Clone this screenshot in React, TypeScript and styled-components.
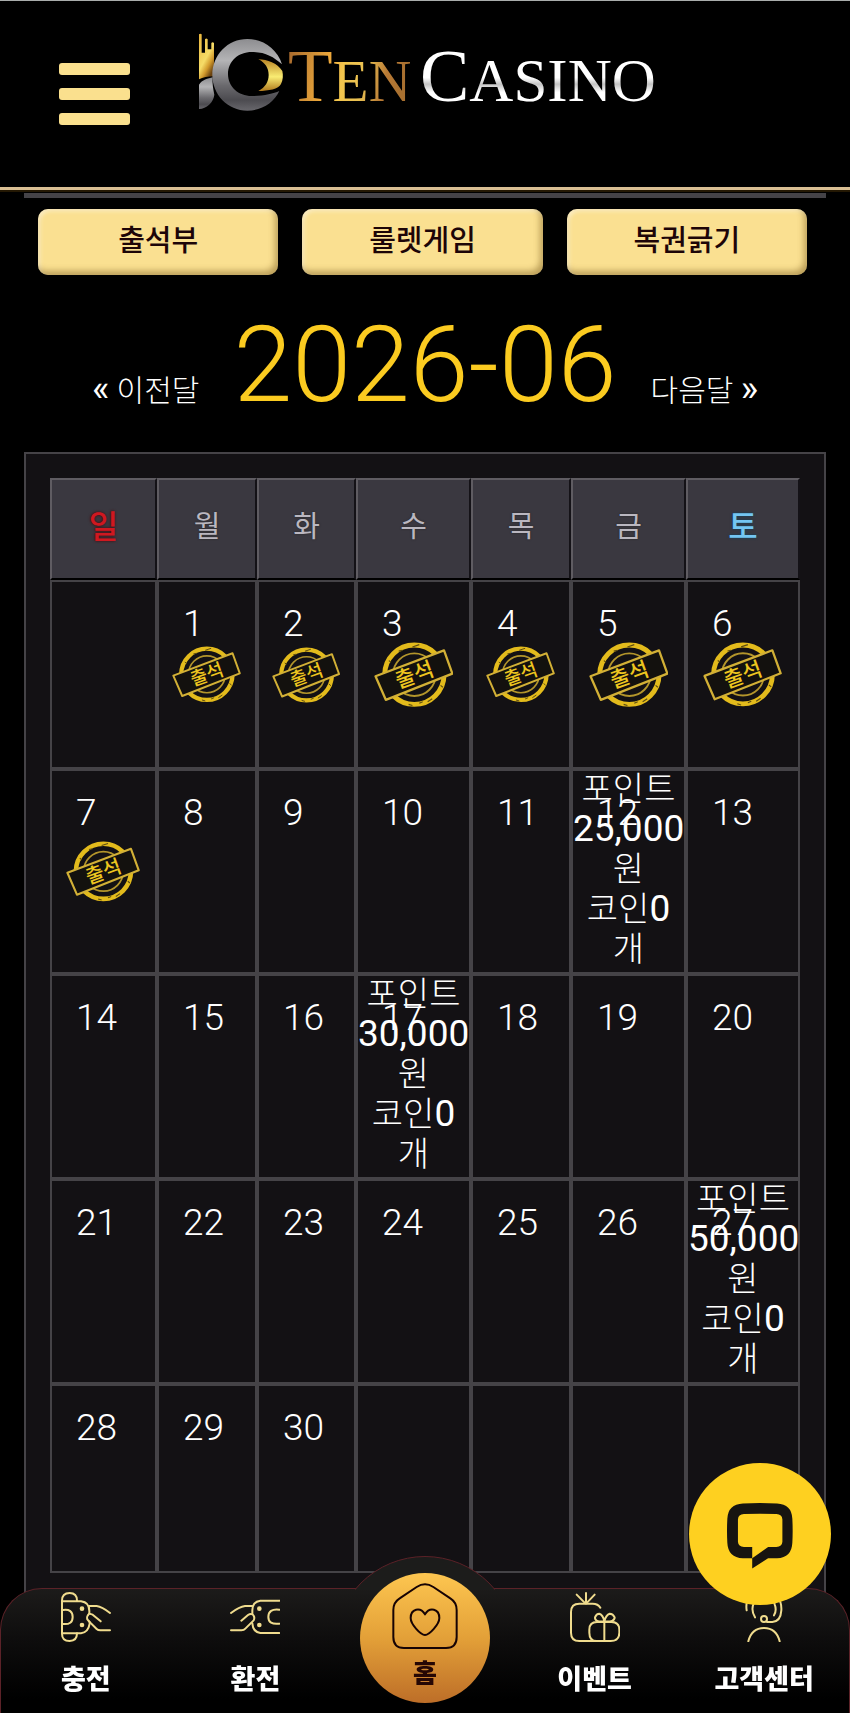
import React from "react";
import styled, { createGlobalStyle } from "styled-components";

const FONT = `Roboto, "Noto Sans CJK KR", sans-serif`;
const LINE = "#454347";

const GlobalStyle = createGlobalStyle`
  *, *::before, *::after { box-sizing: border-box; }
  body { margin: 0; background: #000; color: #fff; font-family: ${FONT}; }
  a { color: inherit; text-decoration: none; }
  button { font-family: inherit; border: 0; cursor: pointer; }
`;

const Page = styled.div`
  padding-bottom: 113px;
`;

const Header = styled.header`
  display: grid;
  grid-template-columns: 1fr auto 1fr;
  align-items: start;
  height: 190px;
  padding-top: 29px;
  border-top: 1px solid #a9adab;
  border-bottom: 3px solid #d9bf93;
  box-shadow: 0 2px 0 #241803;
`;

const MenuButton = styled.button`
  justify-self: start;
  display: flex;
  flex-direction: column;
  gap: 13px;
  width: 71px;
  margin: 33px 0 0 59px;
  padding: 0;
  background: none;
`;

const MenuBar = styled.span`
  height: 12px;
  border-radius: 3px;
  background: #fae08e;
`;

const Content = styled.main`
  margin: 3px 24px 0;
  border-top: 5px solid ${LINE};
`;

const TabBar = styled.nav`
  display: grid;
  grid-template-columns: repeat(3, 1fr);
  gap: 24px;
  padding: 11px 19px 0 14px;
`;

const TabButton = styled.button`
  height: 66px;
  padding: 0 0 3px;
  border-radius: 10px;
  background: #fae091;
  box-shadow: inset -3px -4px 6px rgba(110, 80, 20, 0.45), inset 2px 2px 4px rgba(255, 255, 255, 0.5);
  color: #1d0508;
  font-size: 29px;
  font-weight: 500;
  line-height: 40px;
`;

const MonthNav = styled.div`
  display: flex;
  justify-content: center;
  align-items: baseline;
  gap: 34px;
  height: 177px;
  padding-top: 30px;
`;

const MonthTitle = styled.h1`
  margin: 0;
  color: #fbcb20;
  font-size: 106px;
  font-weight: 300;
  line-height: 120px;
`;

const MonthLink = styled.a`
  font-size: 30px;
  font-weight: 300;
  line-height: 40px;
`;

const Arrow = styled.span`
  font-size: 37px;
  font-weight: 400;
`;

const Panel = styled.section`
  padding: 24px;
  border: 2px solid ${LINE};
  background: #131114;
`;

const Calendar = styled.table`
  width: 100%;
  table-layout: fixed;
  border-collapse: separate;
  border-spacing: 0;
`;

const DayHead = styled.th<{ $tone?: "sun" | "sat" }>`
  height: 102px;
  padding: 0 0 5px;
  border: 2px solid;
  border-color: #5f5c62 #141217 #000 #5f5c62;
  background: #3a3840;
  color: ${(p) => (p.$tone === "sun" ? "#cf1820" : p.$tone === "sat" ? "#74c6f2" : "#bab7c0")};
  font-size: ${(p) => (p.$tone ? 32 : 29)}px;
  font-weight: ${(p) => (p.$tone ? 500 : 400)};
  line-height: 40px;
  text-shadow: ${(p) =>
    p.$tone === "sun" ? "0 0 3px #4a0006" : p.$tone === "sat" ? "0 0 3px #08435f" : "0 0 2px #222"};
`;

const DayCell = styled.td<{ $tall?: boolean }>`
  position: relative;
  height: ${(p) => (p.$tall ? 205 : 189)}px;
  padding: 0;
  border: 2px solid ${LINE};
  text-align: center;
  vertical-align: middle;
`;

const DayNumber = styled.span`
  position: absolute;
  top: 22px;
  left: 24px;
  font-size: 37px;
  font-weight: 300;
  line-height: 40px;
`;

const Reward = styled.div`
  margin: -3px 0 3px;
  font-size: 34px;
  font-weight: 300;
  line-height: 40px;
  white-space: nowrap;
`;

const Amount = styled.b`
  font-size: 37px;
  font-weight: 400;
`;

const StampArt = styled.svg`
  display: block;
  width: 72%;
  margin: 0 auto;
`;

const BottomNav = styled.nav`
  position: fixed;
  left: 0;
  right: 0;
  bottom: 0;
  display: grid;
  grid-template-columns: repeat(5, 1fr);
  height: 125px;
  border: 1px solid #5c2228;
  border-bottom: 0;
  border-radius: 42px 42px 0 0;
  background: linear-gradient(#1c1b1a 0, #0e0d0d 50px, #000 110px);
`;

const Bump = styled.span`
  position: absolute;
  left: 50%;
  bottom: 123px;
  width: 140px;
  height: 34px;
  overflow: hidden;
  transform: translateX(-50%);

  &::before {
    content: "";
    position: absolute;
    top: 0;
    left: -21px;
    width: 182px;
    height: 182px;
    border: 1px solid #5c2228;
    border-radius: 50%;
    background: #1c1c1b;
  }
`;

const NavItem = styled.a`
  display: flex;
  flex-direction: column;
  align-items: center;
  gap: 18px;
  padding-top: 3px;
  font-size: 27px;
  font-weight: 900;
  line-height: 40px;
`;

const HomeItem = styled.a`
  position: relative;
  justify-self: center;
  display: flex;
  flex-direction: column;
  align-items: center;
  gap: 4px;
  width: 130px;
  height: 130px;
  margin-top: -16px;
  padding-top: 9px;
  border-radius: 50%;
  background: linear-gradient(#fdc650, #e3a038 50%, #bd6e28);
  color: #260704;
  font-size: 26px;
  font-weight: 900;
  line-height: 40px;
`;

const ChatButton = styled.button`
  position: fixed;
  right: 19px;
  bottom: 108px;
  display: flex;
  justify-content: center;
  align-items: center;
  width: 142px;
  height: 142px;
  padding: 4px 0 0;
  border-radius: 50%;
  background: #fed020;
`;

const Logo = () => (
  <svg width="464" height="92" viewBox="193 30 464 92" role="img" aria-label="Ten Casino">
    <defs>
      <linearGradient id="steel" x1="0" y1="0" x2="0" y2="1">
        <stop offset="0" stopColor="#8d8d90" />
        <stop offset="0.3" stopColor="#b4b4b6" />
        <stop offset="0.65" stopColor="#6a696d" />
        <stop offset="0.85" stopColor="#4c4b50" />
        <stop offset="1" stopColor="#68676c" />
      </linearGradient>
      <linearGradient id="hand" x1="0" y1="0" x2="0.6" y2="1">
        <stop offset="0" stopColor="#e9b53b" />
        <stop offset="0.6" stopColor="#f6dc67" />
        <stop offset="0.8" stopColor="#d29a2c" />
        <stop offset="1" stopColor="#6b4310" />
      </linearGradient>
      <linearGradient id="eye" x1="0" y1="0" x2="0" y2="1">
        <stop offset="0" stopColor="#b98424" />
        <stop offset="0.55" stopColor="#f9ec73" />
        <stop offset="1" stopColor="#b07a1d" />
      </linearGradient>
      <linearGradient id="gold" x1="0" y1="0" x2="1" y2="0.15">
        <stop offset="0" stopColor="#a3642c" />
        <stop offset="0.2" stopColor="#c98a35" />
        <stop offset="0.38" stopColor="#efa93b" />
        <stop offset="0.5" stopColor="#f3c64d" />
        <stop offset="0.68" stopColor="#e9c052" />
        <stop offset="0.85" stopColor="#b87a35" />
        <stop offset="1" stopColor="#a87030" />
      </linearGradient>
      <linearGradient id="silver" x1="0" y1="0" x2="0" y2="1">
        <stop offset="0.3" stopColor="#fff" />
        <stop offset="0.52" stopColor="#fff" />
        <stop offset="0.6" stopColor="#c4c4c4" />
        <stop offset="0.7" stopColor="#fff" />
      </linearGradient>
    </defs>
    <g transform="scale(0.33333)">
      <path
        fill="url(#hand)"
        d="M597 103q4-4 8 0V158h10V118q4-5 8 0V148h11V129q4-5 8 0V229C624 230 608 232 597 238Z"
      />
      <path fill="url(#steel)" d="M597 254C606 240 624 235 638 232C636 250 640 268 643 284C640 308 620 326 597 327Z" />
      <path
        fill="url(#steel)"
        d="M846 193C832 148 790 117 742 117C683 117 637 165 637 225C637 284 683 332 742 332C785 332 822 308 838 273C820 281 790 288 755 288C715 288 684 260 684 222C684 184 715 156 755 156C795 156 820 170 846 193Z"
      />
      <path
        fill="url(#eye)"
        d="M775 178C802 178 832 190 847 213C850 226 849 240 843 252C836 267 806 273 775 273C796 262 806 245 806 225C806 205 796 188 775 178Z"
      />
    </g>
    <g fontFamily="'Liberation Serif', serif">
      <text x="288" y="101" fontSize="73" fill="url(#gold)">
        T<tspan fontSize="59">EN</tspan>
      </text>
      <text x="420" y="101" fontSize="74" fill="url(#silver)">
        C<tspan fontSize="61">ASINO</tspan>
      </text>
    </g>
  </svg>
);

const Stamp = () => (
  <StampArt viewBox="0 0 210 172" role="img" aria-label="출석">
    <g transform="translate(-455 -601)" fill="none" stroke="#e3bb1c">
      <circle cx="561" cy="687" r="78" strokeWidth="13" />
      <circle cx="561" cy="687" r="56" strokeWidth="5" stroke="#b3952b" />
      <g stroke="#5d4c10" strokeWidth="3">
        <path d="M556 614l18-6M520 625l10-2M596 758l12-8M546 765l10 3M494 650l6 4M630 715l6 5M574 762l9-4" />
      </g>
      <path d="M459 691L639 623L661 684L486 753Z" fill="#13110e" strokeWidth="6" stroke="#d2b036" strokeLinejoin="round" />
      <text
        transform="rotate(-20 561 687)"
        x="561"
        y="707"
        textAnchor="middle"
        fontFamily="'Noto Sans CJK KR', sans-serif"
        fontSize="56"
        fontWeight="500"
        fill="#edc51f"
        stroke="none"
      >
        출석
      </text>
    </g>
  </StampArt>
);

const iconProps = {
  width: 50,
  height: 50,
  fill: "none",
  stroke: "#f0dc8e",
  strokeWidth: 6,
  strokeLinecap: "round" as const,
  strokeLinejoin: "round" as const,
  "aria-hidden": true,
};

const DepositIcon = () => (
  <svg {...iconProps} viewBox="180 155 150 150">
    <path d="M183 181V280Q183 302 206 302Q228 302 228 279M183 181Q183 158 206 158Q228 158 228 181" />
    <path d="M183 183H240Q265 186 265 212V219Q256 228 259 237L266 245V250Q262 276 240 279H183" />
    <path d="M186 209Q215 205 215 230Q215 254 186 251" />
    <path d="M264 197H287Q303 199 327 218M265 220L275 223L299 243M264 243L287 266Q291 270 298 270H327" />
    <circle cx="243" cy="205" r="4" fill="#f0dc8e" />
    <circle cx="243" cy="254" r="4" fill="#f0dc8e" />
  </svg>
);

const WithdrawIcon = () => (
  <svg {...iconProps} viewBox="690 155 150 150">
    <path d="M838 181H781Q757 184 757 210V219M757 249Q759 275 781 278H838" />
    <path d="M838 208Q805 204 805 230Q805 254 838 250" />
    <path d="M757 197H735Q718 199 693 218M724 241L744 224Q751 219 758 222Q766 230 761 240L736 265Q732 270 724 270H693" />
    <circle cx="778" cy="205" r="4" fill="#f0dc8e" />
    <circle cx="778" cy="254" r="4" fill="#f0dc8e" />
  </svg>
);

const EventIcon = () => (
  <svg {...iconProps} viewBox="450 455 150 150">
    <path d="M498 458V489M470 463L496 489M524 463L499 489" />
    <path d="M541 502Q534 490 518 490H478Q453 490 453 515V577Q453 602 478 602H572Q598 602 598 577V568Q598 545 574 545H531Q508 545 508 568V577Q508 602 530 602M553 545V602" />
    <path d="M553 543Q524 546 525 531Q529 520 538 520Q549 523 553 543Q558 523 569 520Q579 520 584 531Q584 546 553 543" />
  </svg>
);

const SupportIcon = () => (
  <svg {...iconProps} viewBox="960 455 150 150">
    <path d="M988 603Q998 563 1035 563Q1072 563 1082 603" />
    <path d="M983 510Q975 460 1035 458Q1090 460 1087 510Q1085 543 1060 545H1044M1008 531Q995 510 1004 489Q1010 470 1035 470Q1062 470 1067 492Q1074 510 1065 525" />
    <circle cx="1035" cy="536" r="9" />
  </svg>
);

const HomeIcon = () => (
  <svg
    width="68"
    height="68"
    viewBox="1173 123 204 204"
    fill="none"
    stroke="#170304"
    strokeWidth="6"
    strokeLinejoin="round"
    aria-hidden
  >
    <path d="M1180 207Q1180 184 1199 172L1250 138Q1275 122 1300 138L1351 172Q1370 184 1370 207V288Q1370 321 1338 321H1212Q1180 321 1180 288Z" />
    <path d="M1275 220C1261 196 1232 203 1232 231C1232 250 1262 282 1275 282C1288 282 1318 250 1318 231C1318 203 1289 196 1275 220Z" />
  </svg>
);

const ChatIcon = () => (
  <svg width="66" height="66" viewBox="921 189 199 198" fill="#171410" aria-hidden>
    <path
      fillRule="evenodd"
      d="M969 190Q1020 187 1072 190Q1116 192 1118 236Q1120 272 1118 308Q1116 353 1072 355H1045L997 386V355H969Q924 353 922 308Q920 272 922 236Q924 192 969 190ZM972 222Q955 223 954 238V305Q955 320 972 321H997V355L1045 321H1070Q1087 320 1088 305V238Q1087 223 1070 222Q1020 220 972 222Z"
    />
  </svg>
);

const COLUMN_WEIGHTS = [107, 100, 99, 115, 100, 115, 114];
const WEEKDAYS = ["일", "월", "화", "수", "목", "금", "토"];
const DAYS_IN_MONTH = 30;
const FIRST_WEEKDAY = 1;
const ATTENDED_THROUGH = 7;
const REWARDS: Record<number, string> = { 12: "25,000", 17: "30,000", 27: "50,000" };

const weeks = Array.from({ length: 5 }, (_, week) =>
  Array.from({ length: 7 }, (_, weekday) => {
    const day = week * 7 + weekday - FIRST_WEEKDAY + 1;
    return day >= 1 && day <= DAYS_IN_MONTH ? day : null;
  })
);

export default function App() {
  return (
    <Page>
      <GlobalStyle />
      <Header>
        <MenuButton aria-label="메뉴">
          <MenuBar />
          <MenuBar />
          <MenuBar />
        </MenuButton>
        <a href="#home">
          <Logo />
        </a>
      </Header>

      <Content>
        <TabBar>
          <TabButton>출석부</TabButton>
          <TabButton>룰렛게임</TabButton>
          <TabButton>복권긁기</TabButton>
        </TabBar>

        <MonthNav>
          <MonthLink href="#prev">
            <Arrow>«</Arrow> 이전달
          </MonthLink>
          <MonthTitle>2026-06</MonthTitle>
          <MonthLink href="#next">
            다음달 <Arrow>»</Arrow>
          </MonthLink>
        </MonthNav>

        <Panel>
          <Calendar>
            <colgroup>
              {COLUMN_WEIGHTS.map((w, i) => (
                <col key={i} width={w} />
              ))}
            </colgroup>
            <thead>
              <tr>
                {WEEKDAYS.map((name, i) => (
                  <DayHead key={name} scope="col" $tone={i === 0 ? "sun" : i === 6 ? "sat" : undefined}>
                    {name}
                  </DayHead>
                ))}
              </tr>
            </thead>
            <tbody>
              {weeks.map((week, w) => (
                <tr key={w}>
                  {week.map((day, d) => (
                    <DayCell key={d} $tall={w > 0 && w < 4}>
                      {day && <DayNumber>{day}</DayNumber>}
                      {day && day <= ATTENDED_THROUGH && <Stamp />}
                      {day && REWARDS[day] && (
                        <Reward>
                          포인트
                          <br />
                          <Amount>{REWARDS[day]}</Amount>
                          <br />
                          원
                          <br />
                          코인<Amount>0</Amount>
                          <br />개
                        </Reward>
                      )}
                    </DayCell>
                  ))}
                </tr>
              ))}
            </tbody>
          </Calendar>
        </Panel>
      </Content>

      <BottomNav>
        <Bump />
        <NavItem href="#deposit">
          <DepositIcon />
          충전
        </NavItem>
        <NavItem href="#withdraw">
          <WithdrawIcon />
          환전
        </NavItem>
        <HomeItem href="#home">
          <HomeIcon />홈
        </HomeItem>
        <NavItem href="#event">
          <EventIcon />
          이벤트
        </NavItem>
        <NavItem href="#support">
          <SupportIcon />
          고객센터
        </NavItem>
      </BottomNav>

      <ChatButton aria-label="채팅 상담">
        <ChatIcon />
      </ChatButton>
    </Page>
  );
}
